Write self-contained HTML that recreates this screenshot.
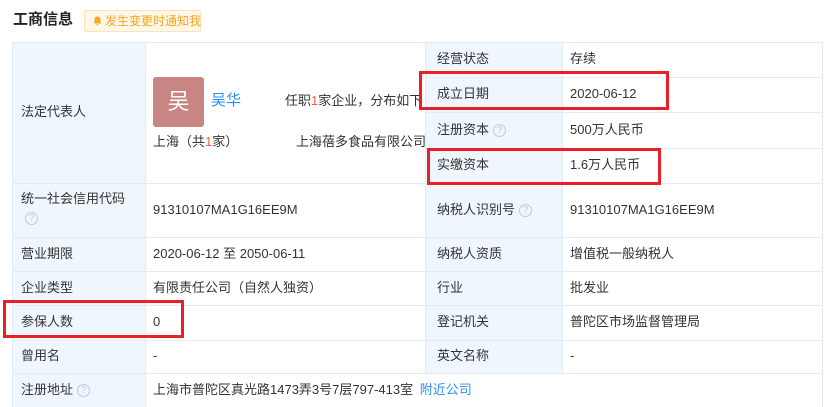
<!DOCTYPE html>
<html><head><meta charset="utf-8"><style>
*{margin:0;padding:0;box-sizing:border-box}
body{width:828px;height:407px;overflow:hidden;background:#fff;font-family:"Liberation Sans","Noto Sans CJK SC",sans-serif;font-size:13px;color:#333;position:relative}
.a{position:absolute;white-space:nowrap;line-height:18px;height:18px}
.lb{position:absolute;background:#f0f6fd}
.h{position:absolute;height:1px;background:#e3ecf5}
.v{position:absolute;width:1px;background:#e3ecf5}
.red{position:absolute;border:3px solid #e8202a}
.q{position:absolute;width:13px;height:13px;border:1px solid #b6cde3;border-radius:50%;font-size:10px;line-height:11px;text-align:center;color:#b6cde3}
</style></head><body>
<div class="a" style="left:13px;top:11px;font-size:15px;font-weight:bold;color:#222">工商信息</div>
<div class="a" style="left:84px;top:10px;width:117px;height:22px;border:1px solid #fde3b5;background:#fff8ea;border-radius:2px;color:#f5a623;font-size:12px;line-height:20px;padding-left:20px">发生变更时通知我
<svg style="position:absolute;left:8px;top:5px" width="9" height="10" viewBox="0 0 9 10"><path d="M4.5 0.5C2.5 0.5 1.5 2 1.5 4V6.5L0.5 7.5H8.5L7.5 6.5V4C7.5 2 6.5 0.5 4.5 0.5Z M3.3 8.3H5.7C5.7 9 5.2 9.5 4.5 9.5C3.8 9.5 3.3 9 3.3 8.3Z" fill="#f5a623"/></svg></div>

<div class="lb" style="left:12px;top:42px;width:133px;height:365px"></div>
<div class="lb" style="left:425px;top:42px;width:137px;height:331px"></div>
<div class="v" style="left:12px;top:42px;height:365px"></div>
<div class="v" style="left:145px;top:42px;height:365px"></div>
<div class="v" style="left:425px;top:42px;height:331px"></div>
<div class="v" style="left:562px;top:42px;height:331px"></div>
<div class="v" style="left:822px;top:42px;height:365px"></div>
<div class="h" style="left:12px;top:42px;width:811px"></div>
<div class="h" style="left:425px;top:77px;width:398px"></div>
<div class="h" style="left:425px;top:112px;width:398px"></div>
<div class="h" style="left:425px;top:148px;width:398px"></div>
<div class="h" style="left:12px;top:183px;width:811px"></div>
<div class="h" style="left:12px;top:237px;width:811px"></div>
<div class="h" style="left:12px;top:271px;width:811px"></div>
<div class="h" style="left:12px;top:305px;width:811px"></div>
<div class="h" style="left:12px;top:340px;width:811px"></div>
<div class="h" style="left:12px;top:373px;width:811px"></div>

<div class="a" style="left:21px;top:103px">法定代表人</div>
<div class="a" style="left:153px;top:77px;width:51px;height:50px;background:#c98484;border-radius:3px;color:#fff;font-size:22px;line-height:50px;text-align:center">吴</div>
<div class="a" style="left:211px;top:92px;font-size:15px;color:#2a8ef5">吴华</div>
<div class="a" style="left:285px;top:92px">任职<span style="color:#f5643c">1</span>家企业，分布如下</div>
<div class="a" style="left:153px;top:133px">上海（共<span style="color:#f5643c">1</span>家）</div>
<div class="a" style="left:296px;top:133px">上海蓓多食品有限公司</div>

<div class="a" style="left:437px;top:50px">经营状态</div><div class="a" style="left:570px;top:50px">存续</div>
<div class="a" style="left:437px;top:85px">成立日期</div><div class="a" style="left:570px;top:85px">2020-06-12</div>
<div class="a" style="left:437px;top:121px">注册资本</div><span class="q" style="left:493px;top:124px">?</span><div class="a" style="left:570px;top:121px">500万人民币</div>
<div class="a" style="left:437px;top:156px">实缴资本</div><div class="a" style="left:570px;top:156px">1.6万人民币</div>

<div class="a" style="left:21px;top:190px">统一社会信用代码</div><span class="q" style="left:25px;top:212px">?</span>
<div class="a" style="left:153px;top:201px">91310107MA1G16EE9M</div>
<div class="a" style="left:437px;top:201px">纳税人识别号</div><span class="q" style="left:519px;top:204px">?</span><div class="a" style="left:570px;top:201px">91310107MA1G16EE9M</div>

<div class="a" style="left:21px;top:245px">营业期限</div><div class="a" style="left:153px;top:245px">2020-06-12 至 2050-06-11</div>
<div class="a" style="left:437px;top:245px">纳税人资质</div><div class="a" style="left:570px;top:245px">增值税一般纳税人</div>
<div class="a" style="left:21px;top:279px">企业类型</div><div class="a" style="left:153px;top:279px">有限责任公司（自然人独资）</div>
<div class="a" style="left:437px;top:279px">行业</div><div class="a" style="left:570px;top:279px">批发业</div>
<div class="a" style="left:21px;top:313px">参保人数</div><div class="a" style="left:153px;top:313px">0</div>
<div class="a" style="left:437px;top:313px">登记机关</div><div class="a" style="left:570px;top:313px">普陀区市场监督管理局</div>
<div class="a" style="left:21px;top:347px">曾用名</div><div class="a" style="left:153px;top:347px">-</div>
<div class="a" style="left:437px;top:347px">英文名称</div><div class="a" style="left:570px;top:347px">-</div>
<div class="a" style="left:21px;top:381px">注册地址</div><span class="q" style="left:77px;top:384px">?</span>
<div class="a" style="left:153px;top:381px">上海市普陀区真光路1473弄3号7层797-413室 <span style="color:#2a8ef5;margin-left:3px">附近公司</span></div>

<div class="red" style="left:419px;top:71px;width:250px;height:39px"></div>
<div class="red" style="left:427px;top:148px;width:234px;height:37px"></div>
<div class="red" style="left:3px;top:300px;width:181px;height:38px"></div>
</body></html>
